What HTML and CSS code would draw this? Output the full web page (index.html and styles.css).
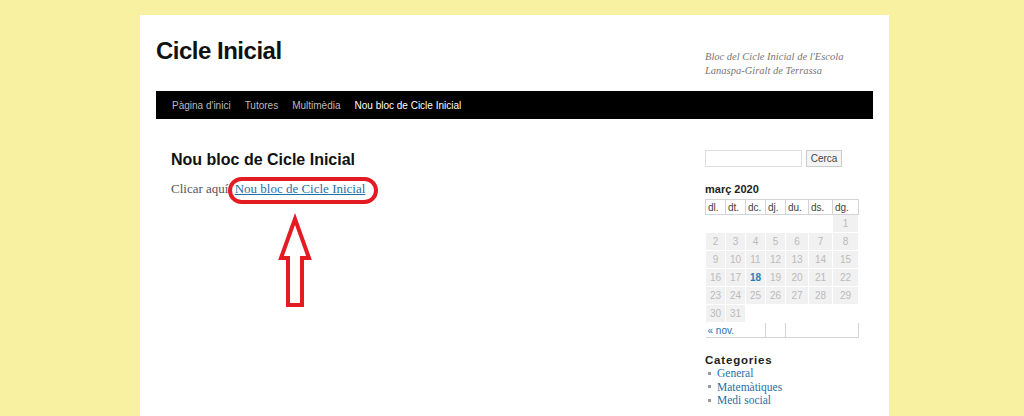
FILE: index.html
```html
<!DOCTYPE html>
<html lang="ca">
<head>
  <meta charset="UTF-8" />
  <title>Nou bloc de Cicle Inicial | Cicle Inicial</title>
  <meta name="viewport" content="width=device-width, initial-scale=1" />
  <link rel="stylesheet" href="styles.css">
</head>
<body>

  <div class="page">

    <!-- Header -->
    <header class="site-header">
      <h1 class="site-title">Cicle Inicial</h1>
      <p class="site-desc">Bloc del Cicle Inicial de l'Escola<br>Lanaspa-Giralt de Terrassa</p>
    </header>

    <!-- Menu -->
    <nav class="menu">
      <a href="#">Pàgina d'inici</a>
      <a href="#">Tutores</a>
      <a href="#">Multimèdia</a>
      <a href="#" class="current">Nou bloc de Cicle Inicial</a>
    </nav>

    <div class="main">

      <!-- Entry -->
      <div class="entry">
        <h2 class="entry-title">Nou bloc de Cicle Inicial</h2>
        <p class="entry-text">Clicar aquí <a href="#" class="entry-link">Nou bloc de Cicle Inicial</a></p>
      </div>

      <!-- Sidebar -->
      <aside class="sidebar">
        <form class="search">
          <input type="text" class="search-field" />
          <button type="button" class="search-btn">Cerca</button>
        </form>

        <div class="widget">
          <h3 class="cal-title">març 2020</h3>
          <table class="calendar">
            <thead>
              <tr>
                <th class="w20">dl.</th><th class="w20">dt.</th><th class="w20">dc.</th><th class="w20">dj.</th><th class="w23">du.</th><th class="w24">ds.</th><th class="w26">dg.</th>
              </tr>
            </thead>
            <tbody>
              <tr><td class="pad" colspan="6"></td><td>1</td></tr>
              <tr><td>2</td><td>3</td><td>4</td><td>5</td><td>6</td><td>7</td><td>8</td></tr>
              <tr><td>9</td><td>10</td><td>11</td><td>12</td><td>13</td><td>14</td><td>15</td></tr>
              <tr><td>16</td><td>17</td><td class="today"><a href="#">18</a></td><td>19</td><td>20</td><td>21</td><td>22</td></tr>
              <tr><td>23</td><td>24</td><td>25</td><td>26</td><td>27</td><td>28</td><td>29</td></tr>
              <tr><td>30</td><td>31</td><td class="pad" colspan="5"></td></tr>
            </tbody>
            <tfoot>
              <tr><td colspan="3" class="prev"><a href="#">« nov.</a></td><td class="mid"></td><td colspan="3" class="next"></td></tr>
            </tfoot>
          </table>
        </div>

        <div class="widget">
          <h3 class="widget-title">Categories</h3>
          <ul class="cats">
            <li><a href="#">General</a></li>
            <li><a href="#">Matemàtiques</a></li>
            <li><a href="#">Medi social</a></li>
          </ul>
        </div>
      </aside>

    </div>

    <!-- Red marks drawn over the screenshot -->
    <svg class="marks" width="749" height="401" viewBox="0 0 749 401">
      <rect x="90" y="164" width="146" height="23" rx="11.5" fill="none" stroke="#e31b23" stroke-width="4" />
      <polygon points="155,204 141,243 148,243 148,290 162,290 162,243 169,243" fill="none" stroke="#e31b23" stroke-width="4" stroke-linejoin="miter" />
    </svg>

  </div>

</body>
</html>
```

FILE: styles.css
```css
* { box-sizing: border-box; }
html, body { margin: 0; height: 100%; overflow: hidden; }
body {
  background: #f7f1a1;
  font-family: "Liberation Sans", Arial, sans-serif;
  color: #333;
}

a { color: #1f6fa8; }

.page {
  position: relative;
  width: 749px;
  min-height: 401px;
  margin: 15px 0 0 140px;
  padding: 0 16px;
  background: #fff;
}

/* header */
.site-header {
  display: flex;
  justify-content: space-between;
  height: 76px;
}

.site-title {
  margin: 0;
  padding-top: 22px;
  font-size: 24px;
  line-height: 28px;
  letter-spacing: -0.5px;
  font-weight: bold;
  color: #111;
}

.site-desc {
  width: 168px;
  margin: 0;
  padding-top: 35px;
  font-family: "Liberation Serif", "Times New Roman", serif;
  font-style: italic;
  font-size: 10.5px;
  line-height: 14px;
  color: #777;
}

/* menu */
.menu {
  display: flex;
  gap: 14px;
  height: 28px;
  padding-left: 16px;
  background: #000;
}

.menu a {
  font-size: 10px;
  line-height: 29px;
  color: #bbb;
  text-decoration: none;
}

.menu a.current { color: #fff; }

/* main */
.main {
  display: flex;
}

.entry {
  width: 549px;
  padding: 31px 0 0 15px;
}

.entry-title {
  margin: 0;
  font-size: 16px;
  line-height: 20px;
  color: #111;
}

.entry-text {
  margin: 9px 0 0;
  font-family: "Liberation Serif", "Times New Roman", serif;
  font-size: 13px;
  line-height: 20px;
  color: #555;
}

.entry-link { margin-left: 3px; }

/* sidebar */
.sidebar {
  width: 153px;
  padding-top: 31px;
}

.search {
  display: flex;
  gap: 4px;
  margin: 0;
}

.search-field {
  width: 97px;
  height: 17px;
  border: 1px solid #ddd;
  padding: 0;
}

.search-btn {
  width: 36px;
  height: 17px;
  padding: 0;
  border: 1px solid #ccc;
  background: #f4f4f4;
  font-family: "Liberation Sans", Arial, sans-serif;
  font-size: 10px;
  color: #444;
}

.cal-title {
  margin: 15px 0 3px;
  font-size: 11px;
  line-height: 14px;
  color: #222;
}

.calendar {
  width: 153px;
  border-collapse: collapse;
  table-layout: fixed;
  font-size: 10px;
}

.calendar th {
  height: 15px;
  padding: 0 0 0 2px;
  border: 1px solid #d4d4d4;
  font-weight: normal;
  text-align: left;
  color: #444;
}

.w20 { width: 20px; }
.w23 { width: 23px; }
.w24 { width: 24px; }
.w26 { width: 26px; }

.calendar td {
  height: 18px;
  padding: 0;
  border: 1px solid #fff;
  background: #f1f1f1;
  text-align: center;
  color: #bbb;
}

.calendar td.pad { background: #fff; }

.calendar td.today a {
  font-weight: bold;
  color: #2b7bb9;
  text-decoration: none;
}

.calendar tfoot td {
  height: 15px;
  background: #fff;
  border: 0;
  border-bottom: 1px solid #d4d4d4;
  border-right: 1px solid #d4d4d4;
  text-align: left;
}

.calendar tfoot td.prev a {
  padding-left: 2px;
  text-decoration: none;
}

.widget-title {
  margin: 15px 0 0;
  font-size: 11.5px;
  line-height: 14px;
  letter-spacing: 0.8px;
  color: #222;
}

.cats {
  margin: 0;
  padding: 0;
  list-style: none;
  font-family: "Liberation Serif", "Times New Roman", serif;
  font-size: 11.5px;
  line-height: 13.5px;
}

.cats li::before {
  content: "";
  display: inline-block;
  width: 3px;
  height: 3px;
  margin: 0 6px 2px 3px;
  background: #999;
  vertical-align: middle;
}

.cats a { text-decoration: none; }

.marks {
  position: absolute;
  top: 0;
  left: 0;
  pointer-events: none;
}
```
